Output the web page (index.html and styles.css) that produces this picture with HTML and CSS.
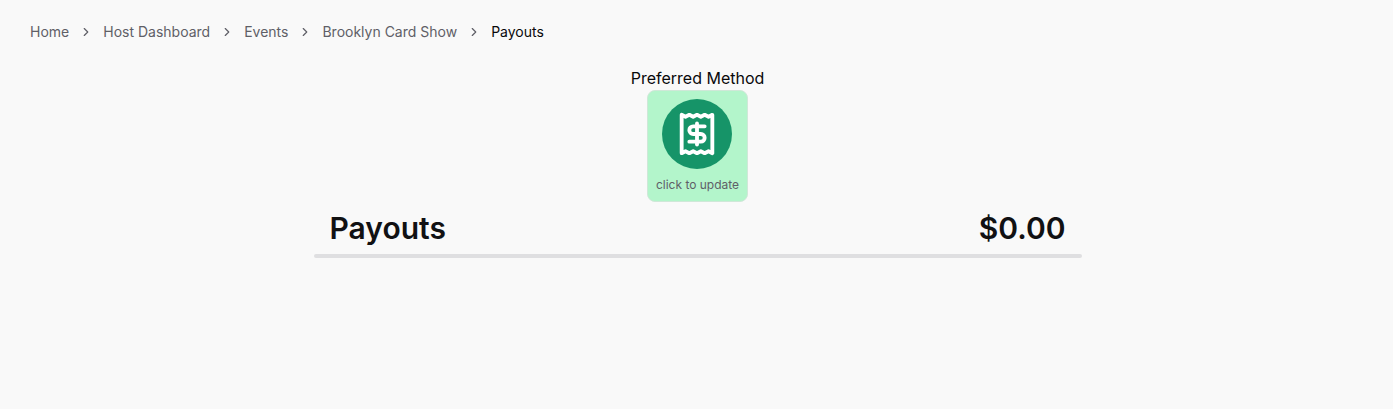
FILE: index.html
```html
<!DOCTYPE html>
<html lang="en">
<head>
<meta charset="utf-8">
<meta name="viewport" content="width=device-width, initial-scale=1">
<title>Payouts</title>
<link rel="stylesheet" href="styles.css">
</head>
<body>
<nav class="breadcrumb" aria-label="Breadcrumb">
  <ol class="breadcrumb-list">
    <li class="crumb"><a href="#">Home</a></li>
    <li class="crumb"><svg class="chevron" viewBox="0 0 24 24" aria-hidden="true"><path d="m9 18 6-6-6-6"/></svg><a href="#">Host Dashboard</a></li>
    <li class="crumb"><svg class="chevron" viewBox="0 0 24 24" aria-hidden="true"><path d="m9 18 6-6-6-6"/></svg><a href="#">Events</a></li>
    <li class="crumb"><svg class="chevron" viewBox="0 0 24 24" aria-hidden="true"><path d="m9 18 6-6-6-6"/></svg><a href="#">Brooklyn Card Show</a></li>
    <li class="crumb"><svg class="chevron" viewBox="0 0 24 24" aria-hidden="true"><path d="m9 18 6-6-6-6"/></svg><span class="current" aria-current="page">Payouts</span></li>
  </ol>
</nav>
<main class="content">
  <section class="method">
    <h2 class="method-title" id="method-title">Preferred Method</h2>
    <button class="method-button" type="button" aria-describedby="method-title">
      <span class="method-icon">
        <svg class="receipt" viewBox="0 0 24 24" aria-hidden="true"><path d="M4 2v20l2-1 2 1 2-1 2 1 2-1 2 1 2-1 2 1V2l-2 1-2-1-2 1-2-1-2 1-2-1-2 1Z"/><path d="M16 8h-6a2 2 0 1 0 0 4h4a2 2 0 1 1 0 4H8"/><path d="M12 17.500v-11"/></svg>
      </span>
      <span class="method-hint">click to update</span>
    </button>
  </section>
  <header class="summary">
    <h1 class="summary-text">Payouts</h1>
    <p class="summary-text">$0.00</p>
  </header>
  <hr class="rule">
</main>
</body>
</html>
```
FILE: styles.css
```css
* { box-sizing: border-box; margin: 0; padding: 0; }

body {
  background: #f9f9f9;
  color: #09090b;
  font-family: Inter, "Liberation Sans", sans-serif;
  font-size: 16px;
  line-height: 24px;
}

.breadcrumb { padding: 22px 30px; }

.breadcrumb-list {
  display: flex;
  flex-wrap: wrap;
  gap: 10px;
  list-style: none;
  font-size: 14px;
  line-height: 20px;
}

.crumb { display: flex; align-items: center; gap: 10px; color: #5f5f67; }
.crumb a { color: inherit; text-decoration: none; }
.crumb .current { color: #09090b; }

.chevron {
  width: 14px;
  height: 14px;
  fill: none;
  stroke: currentColor;
  stroke-width: 2;
  stroke-linecap: round;
  stroke-linejoin: round;
}

.content {
  display: flex;
  flex-direction: column;
  align-items: center;
  padding: 2px 16px 2px 18px;
}

.method { display: flex; flex-direction: column; align-items: center; }
.method-title { font-size: 16px; font-weight: 400; }

.method-button {
  display: flex;
  flex-direction: column;
  align-items: center;
  gap: 8px;
  padding: 8px;
  border: 1px solid #cfe8d8;
  border-radius: 8px;
  background: #b3f5cb;
  color: #5f5f67;
  font: inherit;
  font-size: 12px;
  line-height: 16px;
  cursor: pointer;
}

.method-icon {
  display: grid;
  place-items: center;
  width: 70px;
  height: 70px;
  border-radius: 50%;
  background: #169468;
}

.receipt {
  width: 46px;
  height: 46px;
  fill: none;
  stroke: #fff;
  stroke-width: 2;
  stroke-linecap: round;
  stroke-linejoin: round;
}

.summary {
  display: flex;
  justify-content: space-between;
  width: 100%;
  max-width: 768px;
  padding: 8px 16px;
}

.summary-text {
  color: #111113;
  font-size: 30px;
  font-weight: 600;
  line-height: 36px;
}

.rule {
  width: 100%;
  max-width: 768px;
  height: 4px;
  border: 0;
  border-radius: 2px;
  background: #dfdfe1;
}
```
